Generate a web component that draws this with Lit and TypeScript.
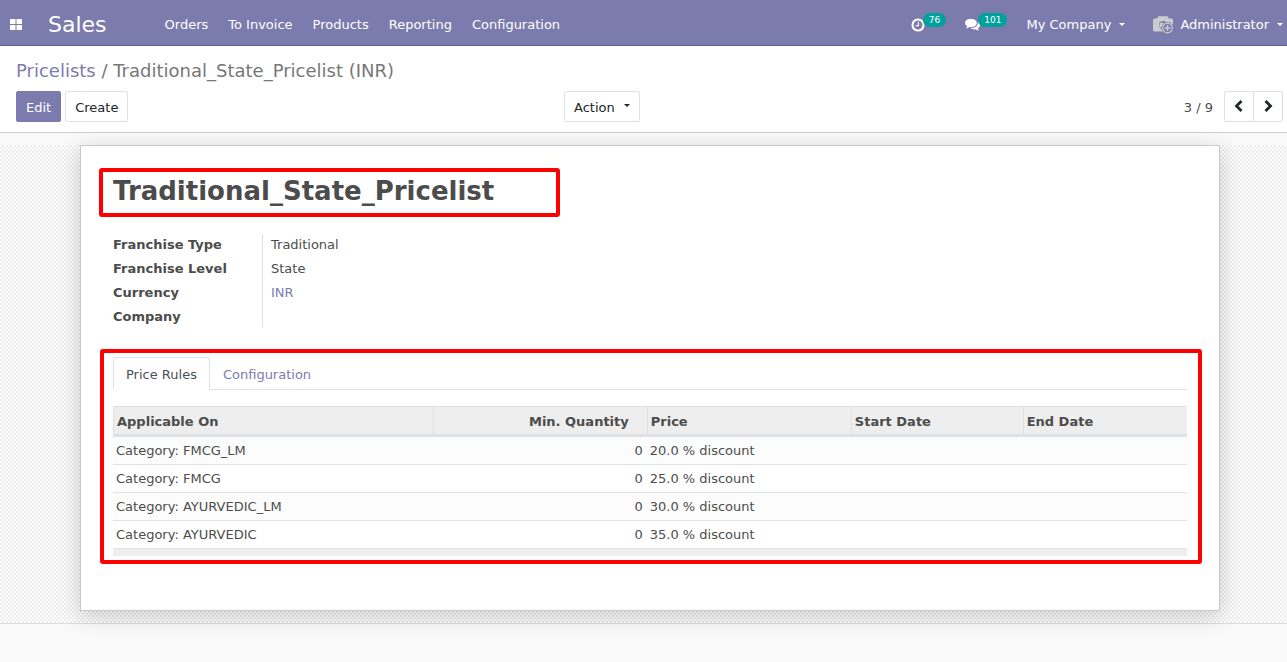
import { LitElement, html, css, svg } from "lit";
import { customElement, state } from "lit/decorators.js";

interface Rule {
  target: string;
  min: number;
  price: string;
}

const MENU = ["Orders", "To Invoice", "Products", "Reporting", "Configuration"];

const RULES: Rule[] = [
  { target: "Category: FMCG_LM", min: 0, price: "20.0 % discount" },
  { target: "Category: FMCG", min: 0, price: "25.0 % discount" },
  { target: "Category: AYURVEDIC_LM", min: 0, price: "30.0 % discount" },
  { target: "Category: AYURVEDIC", min: 0, price: "35.0 % discount" },
];

const appsIcon = html`<svg width="12" height="11" viewBox="0 0 12 11" aria-hidden="true">
  <g fill="#fff">
    <rect x="0" y="0" width="5.5" height="5" rx=".5" /><rect x="6.5" y="0" width="5.5" height="5" rx=".5" />
    <rect x="0" y="6" width="5.5" height="5" rx=".5" /><rect x="6.5" y="6" width="5.5" height="5" rx=".5" />
  </g>
</svg>`;

const clockIcon = html`<svg width="14" height="14" viewBox="0 0 14 14" aria-hidden="true">
  <circle cx="7" cy="7" r="5.5" fill="none" stroke="#fff" stroke-width="2.1" />
  <path d="M7.4 3.8V7.6H4.8" fill="none" stroke="#fff" stroke-width="1.1" />
</svg>`;

const chatIcon = html`<svg width="15" height="14" viewBox="0 0 1792 1568" aria-hidden="true">
  <path
    fill="#fff"
    d="M1408 640q0 139-94 257t-256.500 186.500-353.500 68.500q-86 0-176-16-124 88-278 128-36 9-86 16h-3q-11 0-20.500-8t-11.500-21q-1-3-1-6.500t.5-6.500 2-6l2.500-5 3.500-5.500 4-5 4.500-5 4-4.500q5-6 23-25t26-29.500 22.500-29 25-38.500 20.500-44q-124-72-195-177t-71-224q0-139 94-257t256.500-186.500 353.500-68.500 353.500 68.500 256.500 186.500 94 257zm384 256q0 120-71 224.500t-195 176.500q10 24 20.500 44t25 38.500 22.500 29 26 29.500 23 25q1 1 4 4.500t4.500 5 4 5 3.500 5.500l2.500 5 2 6 .5 6.500-1 6.500q-3 14-13 22t-22 7q-50-7-86-16-154-40-278-128-90 16-176 16-271 0-472-132 58 4 88 4 161 0 309-45t264-129q125-92 192-212t67-254q0-77-23-152 129 71 204 178t75 230z"
    transform="translate(0 -100)"
  />
</svg>`;

const cameraIcon = html`<svg width="20" height="18" viewBox="0 0 20 18" aria-hidden="true">
  <path fill="#ccc" d="M1.500 2.500H4L5.200.3H14.500L16 2.500H18.500Q20 2.500 20 4V14Q20 15.500 18.500 15.500H1.500Q0 15.500 0 14V4Q0 2.500 1.500 2.500Z" />
  <circle cx="10" cy="9" r="4" fill="#7c7bad" />
  <circle cx="9" cy="9" r="2.600" fill="#ccc" />
  <circle cx="14.500" cy="12" r="6" fill="#7c7bad" />
  <circle cx="14.500" cy="12" r="4.800" fill="none" stroke="#ccc" stroke-width="1.200" />
  <path d="M11.500 12H17.500M14.500 9V15" stroke="#ccc" stroke-width="1.400" />
</svg>`;

const chevron = (points: string) => html`<svg width="10" height="12" viewBox="0 0 10 12" aria-hidden="true">
  ${svg`<polyline points=${points} fill="none" stroke="#212529" stroke-width="2.800" />`}
</svg>`;

@customElement("app-root")
export class AppRoot extends LitElement {
  @state() private tab = 0;

  static styles = css`
    :host {
      display: flex;
      flex-direction: column;
      min-height: 100vh;
      background: #f9f9f9;
      color: #4c4c4c;
      font: 13px/20px Verdana, "DejaVu Sans", sans-serif;
    }
    * {
      box-sizing: border-box;
    }
    a {
      color: #7c7bad;
      text-decoration: none;
    }
    button {
      font: inherit;
      cursor: pointer;
    }
    svg {
      display: block;
      flex: none;
    }
    .navbar {
      display: flex;
      align-items: center;
      height: 46px;
      padding: 4px 4px 0 10px;
      background: #7c7bad;
      border-bottom: 1px solid #5f5e97;
    }
    .navbar a,
    .navbar button {
      color: #fff;
    }
    .navbar button {
      display: flex;
      align-items: center;
      padding: 0;
      border: 0;
      background: none;
    }
    .navbar .brand {
      margin: 0 58px 0 26px;
      font-size: 22px;
    }
    .menu {
      display: flex;
      flex: 1;
      gap: 20px;
    }
    .systray {
      display: flex;
      align-items: center;
    }
    .systray .counter {
      margin-right: 19px;
    }
    .badge {
      align-self: flex-start;
      margin: -4px 0 6px -2px;
      padding: 0 6px;
      border-radius: 7px;
      background: #00a09d;
      font-size: 9px;
      line-height: 14px;
    }
    .systray .company {
      margin-right: 28px;
    }
    .systray .user svg {
      margin-right: 7px;
    }
    .caret {
      width: 0;
      margin-left: 8px;
      border: 3px solid transparent;
      border-top-color: currentColor;
      border-bottom: 0;
    }
    .control {
      display: grid;
      gap: 10px;
      padding: 15px 4px 10px 16px;
      background: #fff;
      border-bottom: 1px solid #ccc;
    }
    .breadcrumb {
      font-size: 18px;
      color: #777;
    }
    .slash {
      color: #6c757d;
    }
    .toolbar {
      display: grid;
      grid-template-columns: 548px auto 1fr;
      align-items: center;
    }
    .group {
      display: flex;
      gap: 4px;
    }
    .btn {
      display: flex;
      align-items: center;
      height: 31px;
      padding: 2px 9px 0;
      border: 1px solid #dee2e6;
      border-radius: 2px;
      background: #fff;
      color: #212529;
    }
    .btn.primary {
      background: #7c7bad;
      border-color: #7c7bad;
      color: #fff;
    }
    .btn .caret {
      margin: 0 0 4px 9px;
    }
    .pager {
      display: flex;
      justify-content: flex-end;
      align-items: center;
    }
    .pager > span {
      padding-top: 2px;
    }
    .pages {
      display: flex;
      margin-left: 11px;
    }
    .pages .btn {
      padding: 0 9px 1px;
    }
    .pages .btn + .btn {
      margin-left: -1px;
    }
    .content {
      padding: 12px 67px 12px 80px;
      background:
        linear-gradient(#f9f9f9, #f9f9f9) 0 0 / 100% 12px no-repeat,
        conic-gradient(#ebebeb 25%, #fff 0 50%, #ebebeb 0 75%, #fff 0) 0 0 / 4px 4px;
      border-bottom: 1px solid #ddd;
    }
    .sheet {
      padding: 22px 17px 46px 18px;
      background: #fff;
      border: 1px solid #c8c8d3;
      box-shadow: 0 5px 20px rgba(0, 0, 0, 0.18);
    }
    .marked {
      border: 4px solid #f00;
      border-radius: 3px;
    }
    .title {
      width: fit-content;
      min-width: 461px;
      margin: 0;
      padding: 3px 10px 5px;
      font-size: 26px;
      line-height: 33px;
    }
    .fields {
      display: grid;
      grid-template-columns: 150px 1fr;
      margin: 17px 14px 22px;
    }
    .fields dt {
      padding: 1px 0 3px;
      border-right: 1px solid #ddd;
      font-weight: bold;
      line-height: 20px;
    }
    .fields dt:last-of-type {
      padding-bottom: 0;
    }
    .fields dd {
      margin: 0;
      padding: 1px 0 0 8px;
    }
    .notebook {
      margin: 0 0 0 1px;
      padding: 4px 11px 4px 9px;
    }
    .tabs {
      display: flex;
      margin-bottom: 16px;
      border-bottom: 1px solid #dee2e6;
    }
    .tab {
      height: 33px;
      margin-bottom: -1px;
      padding: 2px 12px 0;
      border: 1px solid transparent;
      border-radius: 3px 3px 0 0;
      background: none;
      color: #7c7bad;
    }
    .tab.active {
      border-color: #dee2e6;
      border-bottom-color: #fff;
      background: #fff;
      color: #495057;
    }
    table {
      width: 100%;
      border-collapse: separate;
      border-spacing: 0;
      table-layout: fixed;
    }
    th {
      height: 31px;
      padding: 2px 3px 0;
      background: #eee;
      border: solid #dee2e6;
      border-width: 1px 0 3px 1px;
      text-align: left;
      font-weight: bold;
    }
    td {
      height: 28px;
      padding: 1px 3px 0;
      border-bottom: 1px solid #dee2e6;
    }
    tbody tr:nth-child(odd) {
      background: #fcfcfc;
    }
    .number {
      text-align: right;
    }
    th.number {
      padding-right: 18px;
    }
    td.number {
      padding-right: 4px;
    }
    tfoot td {
      height: 7px;
      padding: 0;
      border: 0;
      background: #eee;
    }
    .w-target {
      width: 29.8%;
    }
    .w-min {
      width: 19.9%;
    }
    .w-price {
      width: 19%;
    }
    .w-start {
      width: 16%;
    }
  `;

  render() {
    return html`
      <header class="navbar">
        <button class="apps" aria-label="Applications">${appsIcon}</button>
        <a class="brand" href="#">Sales</a>
        <nav class="menu">${MENU.map((m) => html`<a href="#">${m}</a>`)}</nav>
        <div class="systray">
          <button class="counter" aria-label="Activities">${clockIcon}<span class="badge">76</span></button>
          <button class="counter" aria-label="Conversations">${chatIcon}<span class="badge">101</span></button>
          <button class="company">My Company<span class="caret"></span></button>
          <button class="user">${cameraIcon}Administrator<span class="caret"></span></button>
        </div>
      </header>
      <section class="control">
        <nav class="breadcrumb">
          <a href="#">Pricelists</a> <span class="slash">/</span> Traditional_State_Pricelist (INR)
        </nav>
        <div class="toolbar">
          <div class="group">
            <button class="btn primary">Edit</button>
            <button class="btn">Create</button>
          </div>
          <button class="btn">Action<span class="caret"></span></button>
          <div class="pager">
            <span>3 / 9</span>
            <div class="pages">
              <button class="btn" aria-label="Previous">${chevron("7.500,1 2.500,6 7.500,11")}</button>
              <button class="btn" aria-label="Next">${chevron("2.500,1 7.500,6 2.500,11")}</button>
            </div>
          </div>
        </div>
      </section>
      <main class="content">
        <article class="sheet">
          <h1 class="title marked">Traditional_State_Pricelist</h1>
          <dl class="fields">
            <dt>Franchise Type</dt>
            <dd>Traditional</dd>
            <dt>Franchise Level</dt>
            <dd>State</dd>
            <dt>Currency</dt>
            <dd><a href="#">INR</a></dd>
            <dt>Company</dt>
            <dd></dd>
          </dl>
          <section class="notebook marked">
            <div class="tabs" role="tablist">
              ${["Price Rules", "Configuration"].map(
                (name, i) => html`<button
                  class="tab ${this.tab === i ? "active" : ""}"
                  role="tab"
                  aria-selected=${this.tab === i}
                  @click=${() => (this.tab = i)}
                >${name}</button>`
              )}
            </div>
            <table>
              <thead>
                <tr>
                  <th class="w-target">Applicable On</th>
                  <th class="w-min number">Min. Quantity</th>
                  <th class="w-price">Price</th>
                  <th class="w-start">Start Date</th>
                  <th>End Date</th>
                </tr>
              </thead>
              <tbody>
                ${RULES.map(
                  (r) => html`<tr>
                    <td>${r.target}</td>
                    <td class="number">${r.min}</td>
                    <td>${r.price}</td>
                    <td></td>
                    <td></td>
                  </tr>`
                )}
              </tbody>
              <tfoot>
                <tr><td colspan="5"></td></tr>
              </tfoot>
            </table>
          </section>
        </article>
      </main>
    `;
  }
}
